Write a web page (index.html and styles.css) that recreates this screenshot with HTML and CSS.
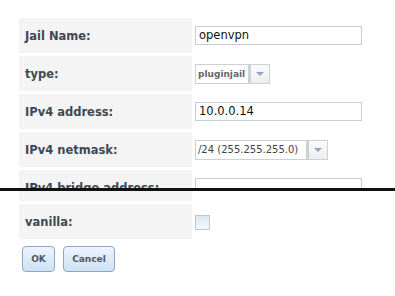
FILE: index.html
```html
<!DOCTYPE html>
<html>

<head>
  <link rel="stylesheet" href="styles.css">
</head>

<body>
  <div class="form upper">
    <div class="label">Jail Name:</div>
    <div class="field"><div class="text">openvpn</div></div>

    <div class="label">type:</div>
    <div class="field">
      <div class="select">
        <span class="value small">pluginjail</span>
        <span class="arrow"><i></i></span>
      </div>
    </div>

    <div class="label">IPv4 address:</div>
    <div class="field"><div class="text">10.0.0.14</div></div>

    <div class="label">IPv4 netmask:</div>
    <div class="field">
      <div class="select">
        <span class="value wide">/24 (255.255.255.0)</span>
        <span class="arrow"><i></i></span>
      </div>
    </div>

    <!-- row cut off by the tear -->
    <div class="label cut"><div class="inner">IPv4 bridge address:</div></div>
    <div class="field cut"><div class="inner"><div class="text"></div></div></div>
  </div>

  <div class="tear"></div>

  <div class="form lower">
    <div class="label strip"></div>
    <div class="field strip"></div>

    <div class="label">vanilla:</div>
    <div class="field"><span class="check"></span></div>
  </div>

  <div class="buttons">
    <button class="btn">OK</button>
    <button class="btn">Cancel</button>
  </div>
</body>

</html>
```

FILE: styles.css
```css
body {
  margin: 0;
  background-color: #fff;
  font-family: "DejaVu Sans", Verdana, sans-serif;
  overflow: hidden;
}

.form {
  display: grid;
  grid-template-columns: 173px 167px;
  column-gap: 3px;
  row-gap: 3px;
  padding-left: 19px;
}

.upper {
  padding-top: 18px;
}

.label {
  height: 35px;
  display: flex;
  align-items: center;
  padding-left: 6px;
  background-color: #f4f4f4;
  color: #3f4853;
  font-size: 11.5px;
  font-weight: bold;
}

.field {
  height: 35px;
  display: flex;
  align-items: center;
}

/* the torn row: only its top part is visible */
.cut {
  height: 18px;
  overflow: hidden;
  align-items: flex-start;
}

.cut .inner {
  height: 35px;
  flex: 1;
  display: flex;
  align-items: center;
}

.tear {
  height: 3px;
  background-color: #111;
}

.strip {
  height: 10px;
}

.field.strip {
  background-color: transparent;
}

.text {
  box-sizing: border-box;
  width: 167px;
  height: 19px;
  border: 1px solid #c6ccd3;
  padding: 0 3px;
  font-size: 11.5px;
  line-height: 17px;
  color: #111;
}

.select {
  display: flex;
  height: 20px;
}

.select .value {
  box-sizing: border-box;
  height: 20px;
  border: 1px solid #ccd1d6;
  padding: 0 2px;
  font-size: 10px;
  line-height: 18px;
  color: #444;
  white-space: nowrap;
  overflow: hidden;
}

.select .value.small {
  width: 54px;
  font-size: 9px;
  font-weight: bold;
  color: #666;
}

.select .value.wide {
  width: 112px;
}

.select .arrow {
  box-sizing: border-box;
  width: 21px;
  height: 20px;
  border: 1px solid #ccd1d6;
  border-left-width: 2px;
  background: linear-gradient(#fbfbfb, #eceef0);
  display: flex;
  align-items: center;
  justify-content: center;
}

.select .arrow i {
  width: 0;
  height: 0;
  border-left: 4px solid transparent;
  border-right: 4px solid transparent;
  border-top: 4px solid #8ea6cb;
}

.check {
  box-sizing: border-box;
  width: 15px;
  height: 15px;
  margin-top: 2px;
  border: 1px solid #bfc6ce;
  background: linear-gradient(#dbe6f2, #f6f9fc);
}

.buttons {
  display: flex;
  gap: 8px;
  padding: 7px 0 0 22px;
}

.btn {
  height: 26px;
  padding: 0;
  border: 1px solid #8ba7c6;
  border-radius: 4px;
  background: linear-gradient(#edf4fc, #cfe1f4);
  color: #505862;
  font-family: "DejaVu Sans", Verdana, sans-serif;
  font-size: 9px;
  font-weight: bold;
}

.btn:first-child {
  width: 33px;
}

.btn:last-child {
  width: 52px;
}
```
